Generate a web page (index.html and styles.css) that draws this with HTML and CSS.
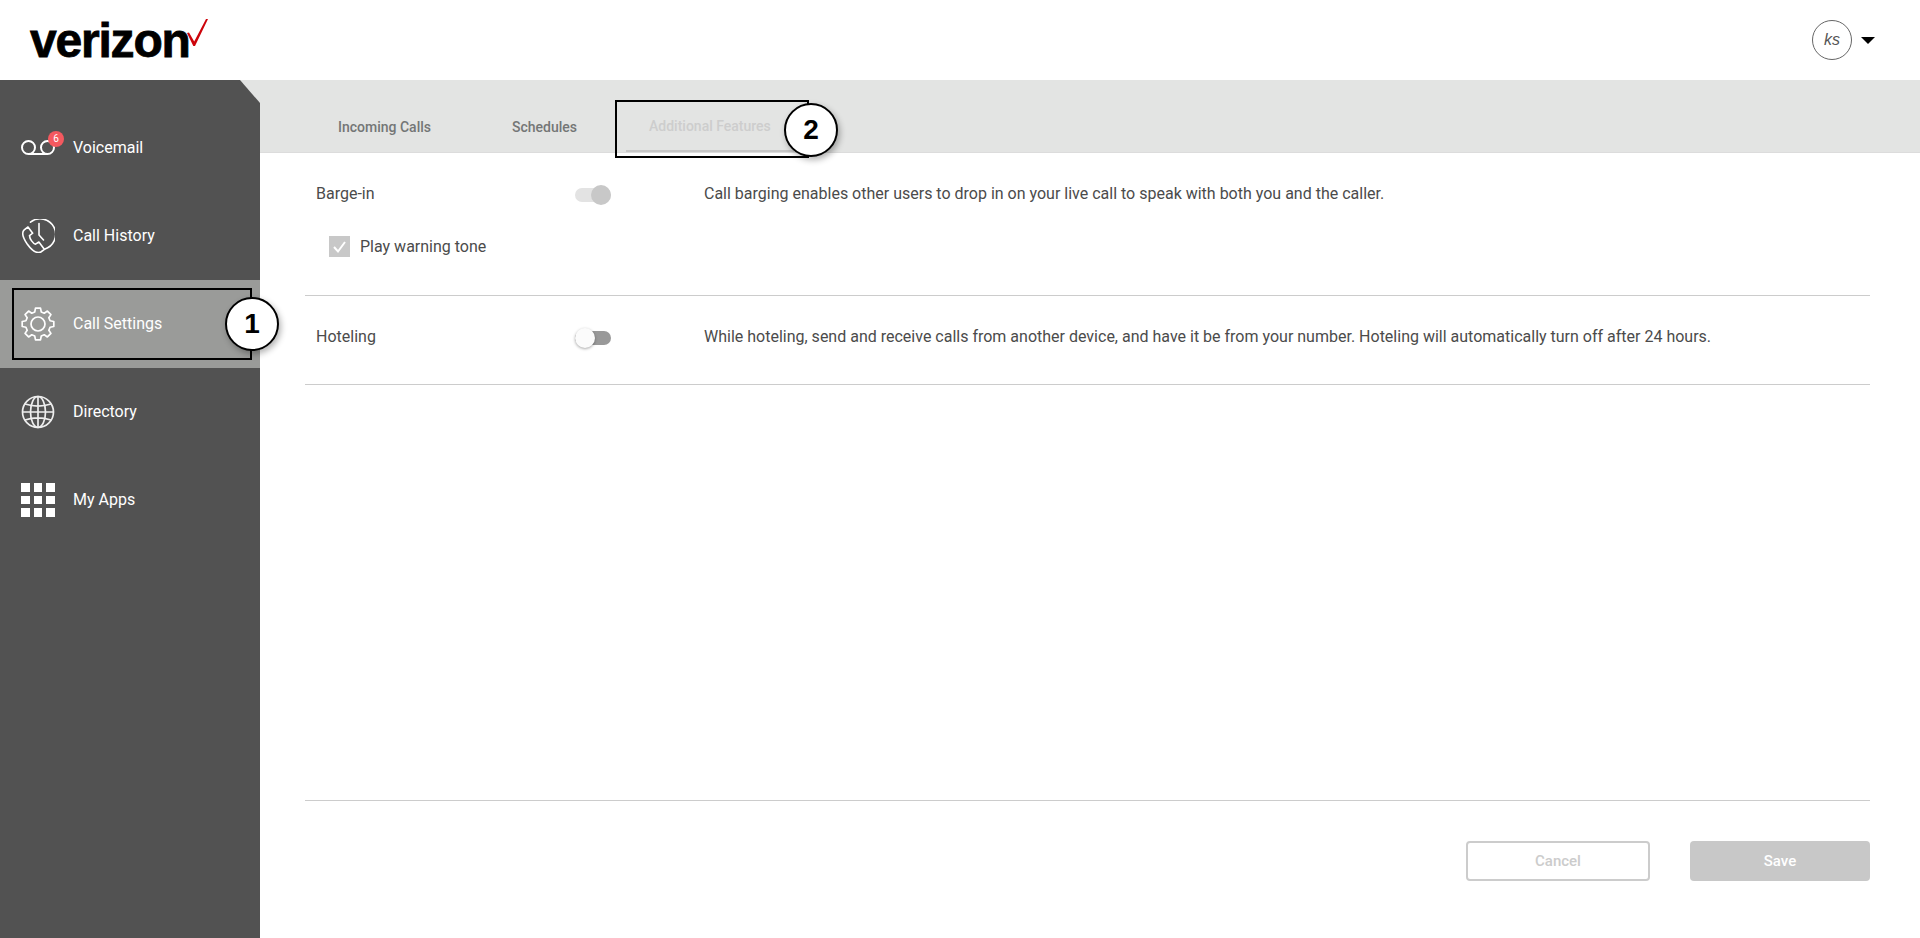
FILE: index.html
```html
<!DOCTYPE html>
<html lang="en">
<head>
<meta charset="utf-8">
<title>Additional Features</title>
<link rel="stylesheet" href="styles.css">
</head>
<body>
<header class="topbar">
  <div class="logo"><span class="logo-word">verizon</span>
    <svg class="logo-check" viewBox="0 0 21 27"><polygon points="0,14 2,13.5 7.2,22.5 19,0 21,0 8,27 6.3,27" fill="#cd040b"/></svg>
  </div>
  <div class="account"><span class="avatar">ks</span><span class="caret"></span></div>
</header>
<div class="layout">
  <div class="side-shell">
    <nav class="sidebar">
      <a class="nav-item">
        <span class="nav-icon">
          <svg viewBox="0 0 34 34" class="icon"><g fill="none" stroke="#fff" stroke-width="2"><circle cx="7.5" cy="16.5" r="6.5"/><circle cx="26.5" cy="16.5" r="6.5"/><path d="M7.5 23h19"/></g></svg>
          <span class="badge">6</span>
        </span>
        <span class="nav-label">Voicemail</span>
      </a>
      <a class="nav-item">
        <span class="nav-icon">
          <svg viewBox="0 0 34 34" class="icon"><g fill="none" stroke="#fff" stroke-width="1.6" stroke-linejoin="round" stroke-linecap="round"><path d="M9.5 3.2A15.5 15.5 0 1 1 23.5 30.2"/><path d="M18 4.5V16l4.5 5"/><path d="M7 8 3.2 10.8C.8 13 1.5 18 6.2 25c4.7 6.6 10 9.6 13.6 8l3.7-2.6-5.6-7.4-3.4 2.2c-2.6-.8-5.8-5.2-6-8.600l3.200-2.400z"/></g></svg>
        </span>
        <span class="nav-label">Call History</span>
      </a>
      <a class="nav-item active">
        <span class="nav-icon">
          <svg viewBox="-17 -17 34 34" class="icon"><g fill="none" stroke="#fff" stroke-width="1.7" stroke-linejoin="round"><path d="M12.07-3.24 15.8-2.5V2.5L12.07 3.24 10.82 6.24 12.94 9.4 9.4 12.94 6.24 10.82 3.24 12.07 2.5 15.8H-2.5L-3.24 12.07-6.24 10.82-9.4 12.94-12.94 9.4-10.82 6.24-12.07 3.24-15.8 2.5V-2.5L-12.07-3.24-10.82-6.24-12.94-9.4-9.4-12.94-6.24-10.82-3.24-12.07-2.5-15.8H2.5L3.24-12.07 6.24-10.82 9.4-12.94 12.94-9.4 10.82-6.24Z"/><circle r="7"/></g></svg>
        </span>
        <span class="nav-label">Call Settings</span>
      </a>
      <a class="nav-item">
        <span class="nav-icon">
          <svg viewBox="0 0 34 34" class="icon"><g fill="none" stroke="#eee" stroke-width="1.700"><circle cx="17" cy="17" r="15.500"/><ellipse cx="17" cy="17" rx="7.500" ry="15.500"/><path d="M17 1.500v31M1.500 17h31M4 9c8 2.500 18 2.500 26 0M4 25c8-2.500 18-2.500 26 0"/></g></svg>
        </span>
        <span class="nav-label">Directory</span>
      </a>
      <a class="nav-item">
        <span class="nav-icon">
          <span class="apps"><i></i><i></i><i></i><i></i><i></i><i></i><i></i><i></i><i></i></span>
        </span>
        <span class="nav-label">My Apps</span>
      </a>
    </nav>
  </div>
  <div class="page">
    <div class="tabs">
      <a class="tab tab-incoming">Incoming Calls</a>
      <a class="tab tab-schedules">Schedules</a>
      <a class="tab tab-features">Additional Features</a>
    </div>
    <main class="content">
      <section class="row row-barge">
        <div class="setting">
          <span class="label">Barge-in</span>
          <span class="toggle on"><span class="knob"></span></span>
          <span class="desc">Call barging enables other users to drop in on your live call to speak with both you and the caller.</span>
        </div>
        <label class="check-row">
          <span class="checkbox"><svg viewBox="0 0 21 21"><path d="M5 11l4 4.500 7-9.500" fill="none" stroke="#fff" stroke-width="2"/></svg></span>
          <span class="label">Play warning tone</span>
        </label>
      </section>
      <section class="row row-hotel">
        <div class="setting">
          <span class="label">Hoteling</span>
          <span class="toggle off"><span class="knob"></span></span>
          <span class="desc">While hoteling, send and receive calls from another device, and have it be from your number. Hoteling will automatically turn off after 24 hours.</span>
        </div>
      </section>
      <footer class="actions">
        <button class="btn btn-cancel">Cancel</button>
        <button class="btn btn-save">Save</button>
      </footer>
    </main>
  </div>
</div>
<div class="callout-box box-one"></div>
<div class="callout-num num-one">1</div>
<div class="callout-box box-two"></div>
<div class="callout-num num-two">2</div>
</body>
</html>
```

FILE: styles.css
```css
* { box-sizing: border-box; }
html, body { margin: 0; height: 938px; overflow: hidden; }
body { font-family: Roboto, "Liberation Sans", sans-serif; color: #4b4b4b; background: #fff; position: relative; }

.topbar { height: 80px; display: flex; justify-content: space-between; align-items: flex-start; padding: 0 45px 0 30px; }
.logo { display: flex; align-items: flex-start; padding-top: 14px; }
.logo-word { font-family: "Liberation Sans", Arial, sans-serif; font-weight: 700; font-size: 48px; line-height: 54px; letter-spacing: -1.2px; color: #000; -webkit-text-stroke: .8px #000; }
.logo-check { width: 21px; height: 27px; margin-top: 5px; margin-left: -3px; }
.account { display: flex; align-items: center; gap: 9px; padding-top: 20px; }
.avatar { width: 40px; height: 40px; border: 1px solid #666; border-radius: 50%; display: flex; align-items: center; justify-content: center; font-family: "Liberation Sans", sans-serif; font-style: italic; font-size: 16px; color: #555; }
.caret { width: 0; height: 0; border-left: 7px solid transparent; border-right: 7px solid transparent; border-top: 7px solid #000; }

.layout { display: flex; height: 858px; }
.side-shell { width: 260px; flex: none; background: linear-gradient(#e3e4e3 0 24px, #fff 24px); }
.sidebar { height: 100%; background: #525252; clip-path: polygon(0 0, 240px 0, 260px 23px, 260px 100%, 0 100%); padding-top: 24px; }
.nav-item { height: 88px; display: flex; align-items: center; padding-left: 21px; gap: 18px; color: #fff; font-size: 16px; font-weight: 400; }
.nav-item.active { background: #9a9b99; }
.nav-label { margin-bottom: 2px; }
.nav-icon { width: 34px; height: 34px; position: relative; display: block; flex: none; }
.icon { width: 34px; height: 34px; display: block; }
.badge { position: absolute; left: 27px; top: 0; width: 16px; height: 16px; border-radius: 50%; background: #f4595f; color: #fff; font-size: 10px; line-height: 16px; text-align: center; font-weight: 400; }
.apps { display: grid; grid-template-columns: repeat(3, 8.500px); grid-auto-rows: 8.500px; gap: 4px; }
.apps i { background: #fff; display: block; }

.page { flex: 1; display: flex; flex-direction: column; min-width: 0; }
.tabs { height: 73px; background: #e3e4e3; border-bottom: 1px solid #dcdcdc; display: flex; align-items: stretch; padding-left: 55px; font-size: 14px; font-weight: 500; color: #747676; }
.tab { display: flex; align-items: center; padding: 22px 23px 0; height: 72px; }
.tab-schedules { margin-left: 35px; }
.tab-features { margin-left: 26px; color: #cdcdcd; border-bottom: 2px solid #c8c8c8; }

.content { flex: 1; display: flex; flex-direction: column; padding: 0 50px 0 45px; font-size: 16px; }
.row { border-bottom: 1px solid #ccc; padding-top: 31px; }
.row-barge { height: 143px; }
.row-hotel { height: 89px; }
.setting { display: grid; grid-template-columns: 270px 129px 1fr; align-items: center; line-height: 20px; }
.setting > .label { padding-left: 11px; }
.toggle { display: block; width: 36px; height: 14px; border-radius: 7px; position: relative; margin-top: 2px; }
.toggle.on { background: #e3e3e3; }
.toggle.off { background: #999; }
.knob { position: absolute; top: -3px; width: 20px; height: 20px; border-radius: 50%; }
.on .knob { right: 0; background: #c8c8c8; }
.off .knob { left: 0; background: #fbfbfb; box-shadow: 0 1px 3px rgba(0,0,0,.35); }
.check-row { display: flex; align-items: center; gap: 10px; margin: 32px 0 0 24px; line-height: 20px; }
.checkbox { width: 21px; height: 21px; background: #c8c8c8; display: block; }
.checkbox svg { display: block; width: 21px; height: 21px; }

.actions { margin-top: auto; height: 138px; border-top: 1px solid #ccc; display: flex; justify-content: flex-end; align-items: flex-start; gap: 40px; padding-top: 40px; }
.btn { height: 40px; border-radius: 4px; font-family: inherit; font-size: 15px; font-weight: 500; }
.btn-cancel { width: 184px; background: #fff; border: 2px solid #ccc; color: #ccc; }
.btn-save { width: 180px; background: #c8c8c8; border: 0; color: #fff; }

.callout-box { position: absolute; border: 2px solid #000; }
.box-one { left: 12px; top: 288px; width: 240px; height: 72px; }
.box-two { left: 615px; top: 100px; width: 194px; height: 58px; }
.callout-num { position: absolute; background: #fff; border: 2px solid #000; border-radius: 50%; width: 54px; height: 54px; display: flex; align-items: center; justify-content: center; font-family: "Liberation Sans", sans-serif; font-weight: 700; font-size: 28px; color: #000; box-shadow: 2px 3px 6px rgba(0,0,0,.3); }
.num-one { left: 225px; top: 297px; }
.num-two { left: 784px; top: 103px; }
```
